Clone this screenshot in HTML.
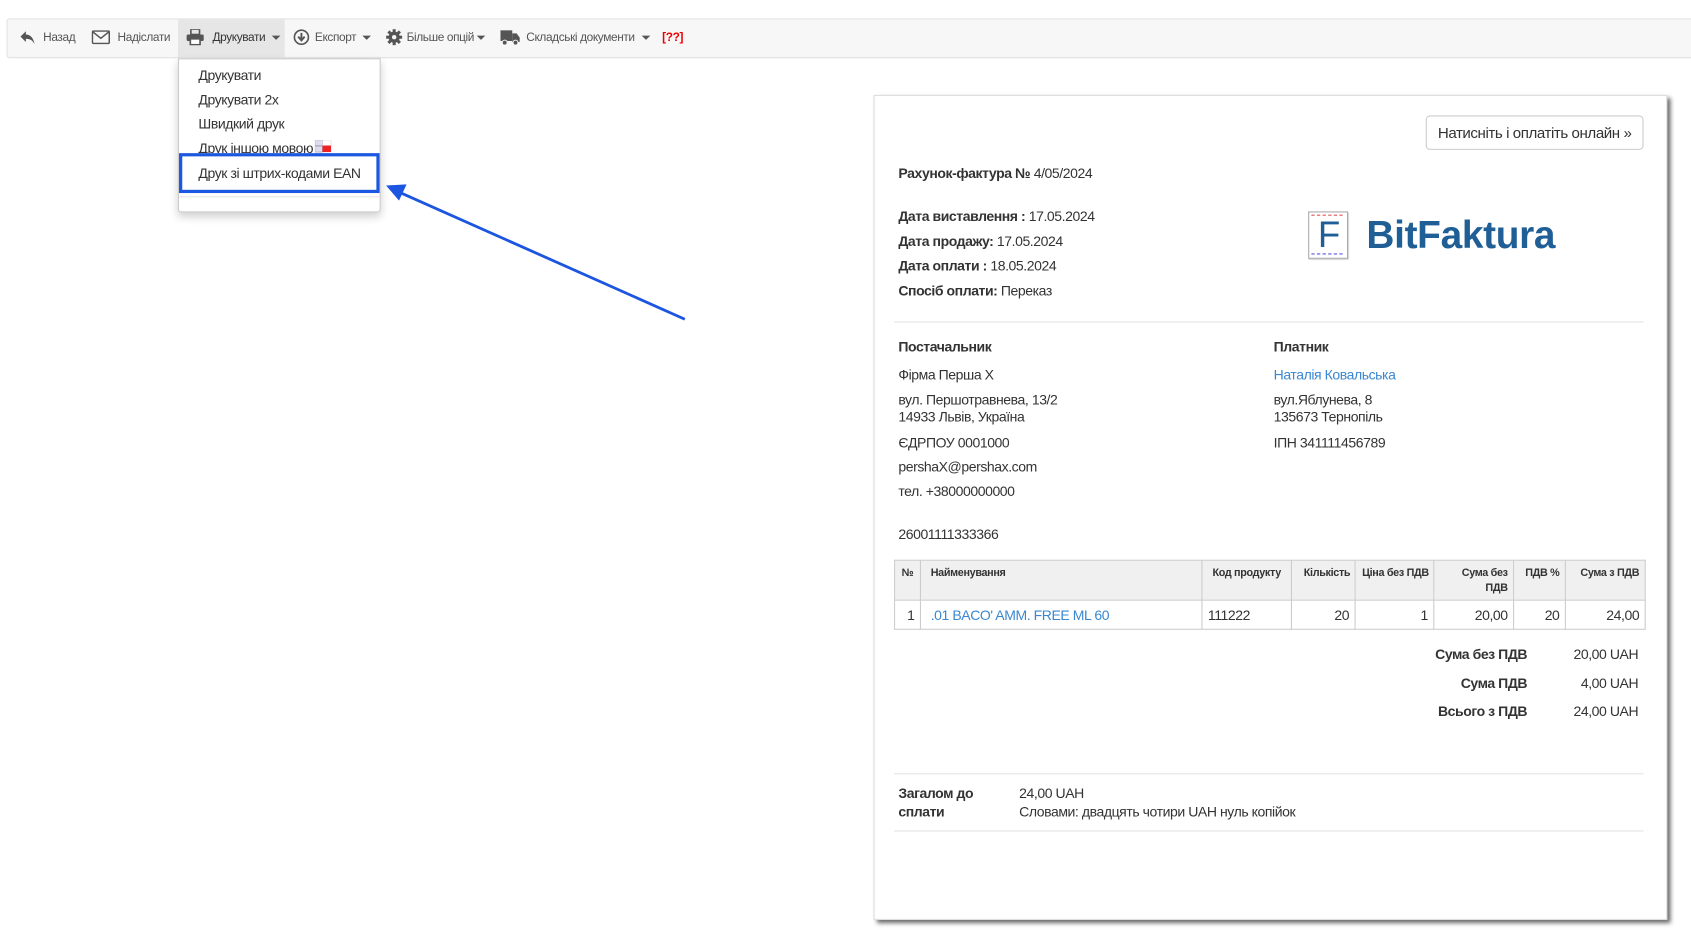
<!DOCTYPE html>
<html><head><meta charset="utf-8">
<style>
html,body{margin:0;padding:0;background:#fff;width:1691px;height:930px;overflow:hidden}
#w{position:absolute;left:0;top:0;width:1568px;height:862px;transform:scale(1.07845);transform-origin:0 0;font-family:"Liberation Sans",Arial,sans-serif;color:#333;letter-spacing:-0.4px}
.a{position:absolute;white-space:nowrap}
.tb{position:absolute;left:6px;top:17px;width:1580px;height:35px;background:#f7f7f7;border:1px solid #e2e2e2;border-radius:3px}
.ti{font-size:11px;color:#555;top:29px;letter-spacing:-0.35px}
.caret{display:inline-block;width:0;height:0;border-left:4px solid transparent;border-right:4px solid transparent;border-top:4px solid #555;vertical-align:middle;margin-left:4px}
.dd{position:absolute;left:165px;top:54px;width:186px;height:141px;background:#fff;border:1px solid #ccc;border-radius:0 0 3px 3px;box-shadow:0 4px 8px rgba(0,0,0,.18)}
.di{font-size:13px;color:#333;left:184px}
.paper{position:absolute;left:810px;top:88px;width:734px;height:763px;background:#fff;border:1px solid #ddd;box-shadow:3px 3px 4px #666}
.t{font-size:13px}
b{font-weight:bold}
.hr{position:absolute;left:829px;width:695px;height:1px;background:#e3e3e3}
table{position:absolute;left:829px;top:519px;width:696px;border-collapse:collapse;font-size:13px;table-layout:fixed}
td,th{border:1px solid #ccc;padding:0 5px;overflow:hidden}
th{background:#f0f0f0;font-size:10px;font-weight:bold;height:31px;vertical-align:top;padding-top:5px;color:#333;line-height:14px;letter-spacing:-0.3px}
td{height:26px;padding-top:0;padding-bottom:0}
.r{text-align:right}
</style></head><body><div id="w">
<div class="tb"></div>
<div class="a" style="left:165px;top:18px;width:99px;height:35px;background:#e6e6e6"></div>
<svg class="a" style="left:18px;top:28px" width="15" height="14" viewBox="0 0 15 14"><path d="M6 1 L1 6 L6 11 V8 C10 8 12 9 14 13 C13 7 10 4 6 4 Z" fill="#555"/></svg>
<div class="a ti" style="left:40px">Назад</div>
<svg class="a" style="left:85px;top:28px" width="17" height="13" viewBox="0 0 17 13"><rect x="0.7" y="0.7" width="15.6" height="11.6" rx="1" fill="none" stroke="#555" stroke-width="1.4"/><path d="M1 1.5 L8.5 7.5 L16 1.5" fill="none" stroke="#555" stroke-width="1.4"/></svg>
<div class="a ti" style="left:109px">Надіслати</div>
<svg class="a" style="left:173px;top:27px" width="16" height="15" viewBox="0 0 16 15"><rect x="4" y="0" width="8" height="5" fill="none" stroke="#555" stroke-width="1.5"/><rect x="0" y="5" width="16" height="6" rx="1.5" fill="#555"/><rect x="3.5" y="9" width="9" height="5.5" fill="#fff" stroke="#555" stroke-width="1.5"/></svg>
<div class="a ti" style="left:197px;color:#333">Друкувати<span class="caret" style="margin-left:6px"></span></div>
<svg class="a" style="left:272px;top:27px" width="15" height="15" viewBox="0 0 15 15"><circle cx="7.5" cy="7.5" r="6.5" fill="none" stroke="#555" stroke-width="1.5"/><path d="M7.5 3.5 V9 M4.5 7 L7.5 10.5 L10.5 7" fill="none" stroke="#555" stroke-width="1.8"/></svg>
<div class="a ti" style="left:292px">Експорт<span class="caret" style="margin-left:6px"></span></div>
<svg class="a" style="left:358px;top:27px" width="15" height="15" viewBox="0 0 16 16"><g fill="#555"><circle cx="8" cy="8" r="5.5"/><rect x="6.5" y="0" width="3" height="16"/><rect x="0" y="6.5" width="16" height="3"/><rect x="6.5" y="0" width="3" height="16" transform="rotate(45 8 8)"/><rect x="6.5" y="0" width="3" height="16" transform="rotate(-45 8 8)"/></g><circle cx="8" cy="8" r="2.2" fill="#f7f7f7"/></svg>
<div class="a ti" style="left:377px">Більше опцій<span class="caret" style="margin-left:2px"></span></div>
<svg class="a" style="left:464px;top:28px" width="18" height="14" viewBox="0 0 18 14"><rect x="0" y="0" width="11" height="10" fill="#555"/><path d="M11 3 H15 L18 7 V11 H11 Z" fill="#555"/><circle cx="4" cy="11.5" r="2.3" fill="#555" stroke="#f7f7f7"/><circle cx="14" cy="11.5" r="2.3" fill="#555" stroke="#f7f7f7"/></svg>
<div class="a ti" style="left:488px">Складські документи<span class="caret" style="margin-left:6px"></span></div>
<div class="a ti" style="left:614px;color:#e00;font-weight:bold">[??]</div>

<div class="dd"></div>
<div class="a di" style="top:62px">Друкувати</div>
<div class="a di" style="top:85px">Друкувати 2x</div>
<div class="a di" style="top:107px">Швидкий друк</div>
<div class="a di" style="top:130px">Друк іншою мовою</div>
<svg class="a" style="left:292px;top:130px" width="16" height="12" viewBox="0 0 16 12"><rect x="0" y="0" width="7" height="5" fill="#dde" stroke="#88a" stroke-width=".5"/><rect x="0" y="6" width="7" height="5" fill="#dde" stroke="#88a" stroke-width=".5"/><rect x="7" y="0" width="8" height="5" fill="#fff" stroke="#ccc" stroke-width=".5"/><rect x="7" y="5" width="8" height="6" fill="#e22"/></svg>
<div class="a" style="left:166px;top:182px;width:186px;height:1px;background:#e5e5e5"></div>
<div class="a" style="left:166px;top:142px;width:180px;height:31px;border:3px solid #1b57e0;background:#fff"></div>
<div class="a di" style="top:153px">Друк зі штрих-кодами EAN</div>
<svg class="a" style="left:0;top:0" width="700" height="320"><line x1="635" y1="296" x2="372" y2="179" stroke="#1b55e0" stroke-width="2.6"/><path d="M358 172 L377 171 L370 186 Z" fill="#1b55e0"/></svg>

<div class="paper"></div>
<div class="a" style="left:1322px;top:107px;width:200px;height:30px;border:1px solid #ccc;border-radius:4px;font-size:14px;line-height:30px;text-align:center">Натисніть і оплатіть онлайн »</div>
<div class="a t" style="left:833px;top:153px"><b>Рахунок-фактура №</b> 4/05/2024</div>
<div class="a t" style="left:833px;top:193px"><b>Дата виставлення :</b> 17.05.2024</div>
<div class="a t" style="left:833px;top:216px"><b>Дата продажу:</b> 17.05.2024</div>
<div class="a t" style="left:833px;top:239px"><b>Дата оплати :</b> 18.05.2024</div>
<div class="a t" style="left:833px;top:262px"><b>Спосіб оплати:</b> Переказ</div>
<div class="a" style="left:1213px;top:196px;width:35px;height:42px;border:1px solid #aaa;box-shadow:1px 1px 1px #bbb"></div>
<div class="a" style="left:1216px;top:199px;width:29px;border-top:1px dashed #d55;"></div>
<div class="a" style="left:1216px;top:235px;width:29px;border-top:1px dashed #55d;"></div>
<div class="a" style="left:1222px;top:199px;font-size:34px;color:#1f5f96;line-height:38px;letter-spacing:0">F</div>
<div class="a" style="left:1267px;top:195px;font-size:36px;font-weight:bold;color:#1f5f96;letter-spacing:-0.3px;line-height:46px">BitFaktura</div>
<div class="hr" style="top:298px"></div>
<div class="a t" style="left:833px;top:314px"><b>Постачальник</b></div>
<div class="a t" style="left:1181px;top:314px"><b>Платник</b></div>
<div class="a t" style="left:833px;top:340px">Фірма Перша X</div>
<div class="a t" style="left:833px;top:363px">вул. Першотравнева, 13/2</div>
<div class="a t" style="left:833px;top:379px">14933 Львів, Україна</div>
<div class="a t" style="left:833px;top:403px">ЄДРПОУ 0001000</div>
<div class="a t" style="left:833px;top:425px">pershaX@pershax.com</div>
<div class="a t" style="left:833px;top:448px">тел. +38000000000</div>
<div class="a t" style="left:833px;top:488px">26001111333366</div>
<div class="a t" style="left:1181px;top:340px;color:#3a87d0">Наталія Ковальська</div>
<div class="a t" style="left:1181px;top:363px">вул.Яблунева, 8</div>
<div class="a t" style="left:1181px;top:379px">135673 Тернопіль</div>
<div class="a t" style="left:1181px;top:403px">ІПН 341111456789</div>
<table>
<colgroup><col style="width:24px"><col style="width:261px"><col style="width:83px"><col style="width:59px"><col style="width:73px"><col style="width:74px"><col style="width:48px"><col style="width:74px"></colgroup>
<tr><th style="padding:5px 3px 0">№</th><th style="text-align:left;padding-left:9px">Найменування</th><th style="white-space:nowrap">Код продукту</th><th class="r" style="white-space:nowrap;padding-right:4px">Кількість</th><th style="white-space:nowrap;padding-left:6px">Ціна без ПДВ</th><th class="r">Сума без ПДВ</th><th class="r" style="white-space:nowrap">ПДВ %</th><th class="r" style="white-space:nowrap">Сума з ПДВ</th></tr>
<tr><td class="r">1</td><td style="color:#3a87d0;padding-left:9px">.01 BACO' AMM. FREE ML 60</td><td>111222</td><td class="r">20</td><td class="r">1</td><td class="r">20,00</td><td class="r">20</td><td class="r">24,00</td></tr>
</table>
<div class="a t" style="right:152px;top:599px"><b>Сума без ПДВ</b></div>
<div class="a t" style="right:49px;top:599px">20,00 UAH</div>
<div class="a t" style="right:152px;top:626px"><b>Сума ПДВ</b></div>
<div class="a t" style="right:49px;top:626px">4,00 UAH</div>
<div class="a t" style="right:152px;top:652px"><b>Всього з ПДВ</b></div>
<div class="a t" style="right:49px;top:652px">24,00 UAH</div>
<div class="hr" style="top:717px"></div>
<div class="a t" style="left:833px;top:727px;line-height:17px"><b>Загалом до<br>сплати</b></div>
<div class="a t" style="left:945px;top:727px;line-height:17px">24,00 UAH<br>Словами: двадцять чотири UAH нуль копійок</div>
<div class="hr" style="top:770px"></div>
</div></body></html>
